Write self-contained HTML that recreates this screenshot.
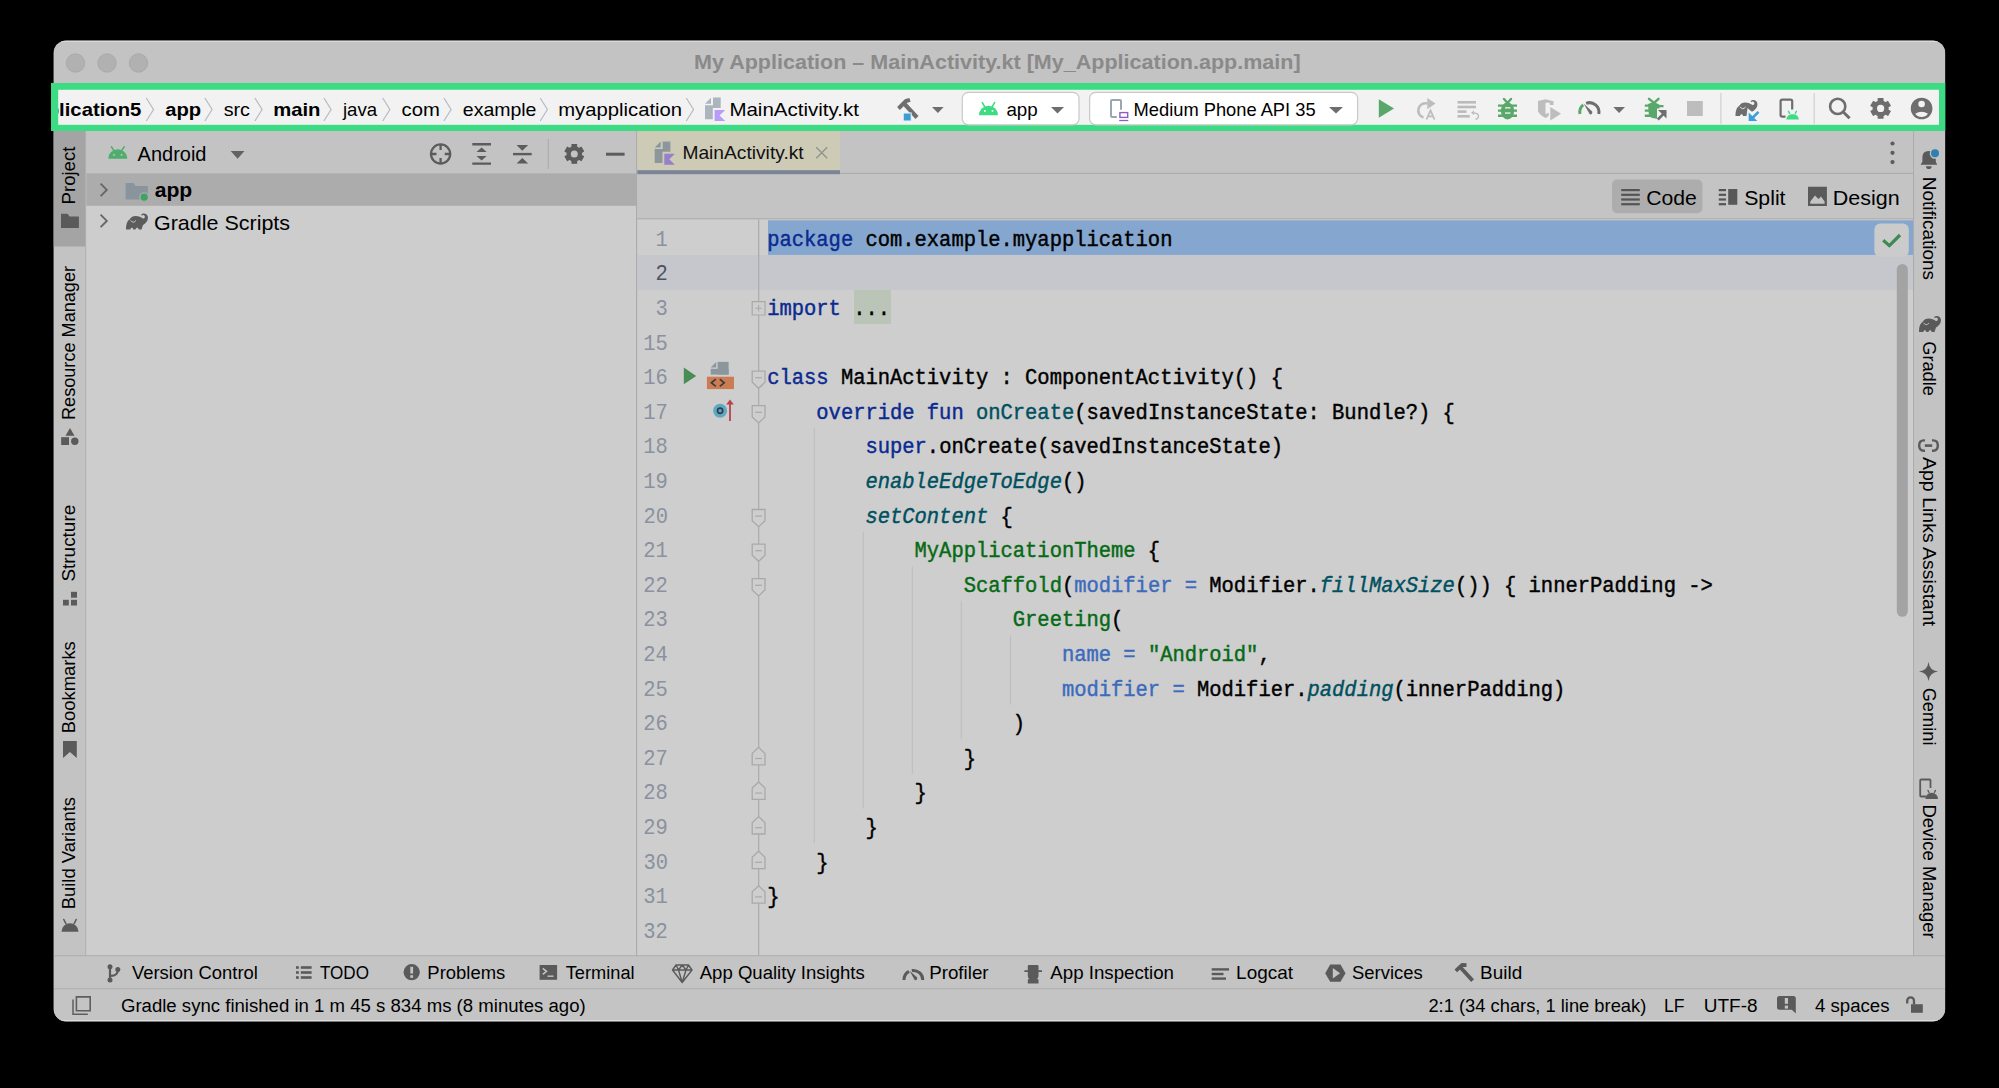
<!DOCTYPE html>
<html><head><meta charset="utf-8"><title>Android Studio</title>
<style>
html,body{margin:0;padding:0;background:#000;width:1999px;height:1088px;overflow:hidden}
svg{display:block;position:absolute;left:0;top:0}
text{font-family:"Liberation Sans",sans-serif}
.code text{font-family:"Liberation Mono",monospace;font-size:22.3px;stroke-width:0.45px}
</style></head>
<body>
<svg width="1999" height="1088" viewBox="0 0 1999 1088">
<defs><clipPath id="win"><rect x="53.5" y="40.5" width="1891.8" height="981.0" rx="13"/></clipPath><clipPath id="bc"><rect x="58" y="90" width="1881" height="35"/></clipPath></defs>
<g clip-path="url(#win)">
<rect x="53.5" y="40.5" width="1891.8" height="981.0" fill="#c4c4c4"/>
<rect x="53.5" y="40.5" width="1891.8" height="43.0" fill="#c3c3c3"/>
<rect x="53.5" y="40.5" width="1891.8" height="1.2" fill="#e4e4e4"/>
<circle cx="75.5" cy="63" r="9.2" fill="#b1b1b1" stroke="#a6a6a6" stroke-width="0.8"/>
<circle cx="107" cy="63" r="9.2" fill="#b1b1b1" stroke="#a6a6a6" stroke-width="0.8"/>
<circle cx="138.5" cy="63" r="9.2" fill="#b1b1b1" stroke="#a6a6a6" stroke-width="0.8"/>
<rect x="53.5" y="131" width="32.0" height="825" fill="#c3c3c3"/>
<rect x="53.5" y="131" width="31.8" height="115.5" fill="#a4a4a4"/>
<rect x="85.3" y="131" width="1.0" height="825" fill="#acacac"/>
<rect x="86.3" y="131" width="549.7" height="42.3" fill="#c3c3c3"/>
<rect x="86.3" y="173.3" width="549.7" height="782.7" fill="#cdcdcd"/>
<rect x="86.3" y="173.3" width="549.7" height="32.5" fill="#acacac"/>
<rect x="636" y="131" width="1.3" height="825" fill="#acacac"/>
<rect x="637.3" y="131" width="1275.7" height="43" fill="#c3c3c3"/>
<rect x="840" y="172.8" width="1073" height="1.4" fill="#adadad"/>
<rect x="637.3" y="174.2" width="1275.7" height="44.3" fill="#c4c4c4"/>
<rect x="637.3" y="218.3" width="1275.7" height="1.2" fill="#acacac"/>
<rect x="637.3" y="219.5" width="1275.7" height="736.0" fill="#cecece"/>
<rect x="637.3" y="255" width="1275.7" height="34.8" fill="#c6c7cc"/>
<rect x="1913" y="131" width="1.2" height="825" fill="#acacac"/>
<rect x="1914.2" y="131" width="31.1" height="825" fill="#c3c3c3"/>
<rect x="53.5" y="955.3" width="1891.8" height="1.2" fill="#acacac"/>
<rect x="53.5" y="956.5" width="1891.8" height="32.0" fill="#c4c4c4"/>
<rect x="53.5" y="988.3" width="1891.8" height="1.2" fill="#adadad"/>
<rect x="53.5" y="989.5" width="1891.8" height="32.0" fill="#c4c4c4"/>
<rect x="53.5" y="1020.3" width="1891.8" height="1.2" fill="#e8e8e8"/>
</g>
<rect x="51" y="83" width="1894.3" height="48" fill="#3ddc84"/>
<rect x="58.2" y="89.8" width="1880.8" height="35.0" fill="#f2f2f2"/>
<g clip-path="url(#bc)">
</g>
<path d="M146.3,98 L153.5,109.5 L146.3,121" fill="none" stroke="#b3bbc2" stroke-width="1.2" stroke-linejoin="miter"/>
<path d="M204.9,98 L212.1,109.5 L204.9,121" fill="none" stroke="#b3bbc2" stroke-width="1.2" stroke-linejoin="miter"/>
<path d="M254.9,98 L262.1,109.5 L254.9,121" fill="none" stroke="#b3bbc2" stroke-width="1.2" stroke-linejoin="miter"/>
<path d="M323.9,98 L331.09999999999997,109.5 L323.9,121" fill="none" stroke="#b3bbc2" stroke-width="1.2" stroke-linejoin="miter"/>
<path d="M382.7,98 L389.9,109.5 L382.7,121" fill="none" stroke="#b3bbc2" stroke-width="1.2" stroke-linejoin="miter"/>
<path d="M443.9,98 L451.09999999999997,109.5 L443.9,121" fill="none" stroke="#b3bbc2" stroke-width="1.2" stroke-linejoin="miter"/>
<path d="M540.2,98 L547.4000000000001,109.5 L540.2,121" fill="none" stroke="#b3bbc2" stroke-width="1.2" stroke-linejoin="miter"/>
<path d="M686.3,98 L693.5,109.5 L686.3,121" fill="none" stroke="#b3bbc2" stroke-width="1.2" stroke-linejoin="miter"/>
<g transform="translate(700,94) scale(1)"><path d="M5,9.8 L11,3.8 L11,9.8 Z" fill="#abb5bd"/><path d="M13,3.6 H20.7 V14 H12.8 V25.2 H5 V11.2 H13 Z" fill="#abb5bd"/><path d="M14.6,16 H25.2 L19.6,21.5 L25.2,27 H14.6 Z" fill="#b99bf8"/></g>
<g transform="translate(890,94) scale(1)"><path d="M8.5,14.5 L16,7 L20,5.8" stroke="#6e6e6e" stroke-width="4" fill="none" stroke-linejoin="round"/><path d="M14.5,10 L27,23.5" stroke="#6e6e6e" stroke-width="4.2" fill="none"/><rect x="13.2" y="19" width="8" height="8" fill="#3a9fd9" stroke="#f2f2f2" stroke-width="1"/><path d="M42,13 H53.7 L47.9,19 Z" fill="#6e6e6e"/></g>
<rect x="962.3" y="92.3" width="116.7" height="32.5" fill="#ffffff" rx="6" stroke="#c9c9c9" stroke-width="1.2"/>
<g transform="translate(970,94) scale(1)"><path d="M9,21.2 A9.5,9.5 0 0 1 28,21.2 Z" fill="#3ddc84"/><path d="M12.3,8.6 L14.6,12.6 M24.6,8.6 L22.3,12.6" stroke="#3ddc84" stroke-width="1.6" stroke-linecap="round"/><rect x="14" y="16" width="1.6" height="1.8" fill="#fff"/><rect x="21.7" y="16" width="1.6" height="1.8" fill="#fff"/></g>
<path d="M1051,107 H1064 L1057.5,113.5 Z" fill="#6e6e6e"/>
<rect x="1089.6" y="92.3" width="268.0" height="32.5" fill="#ffffff" rx="6" stroke="#c9c9c9" stroke-width="1.2"/>
<g transform="translate(1100,94) scale(1)"><path d="M16.8,23 H12 Q11,23 11,22 V7 Q11,6 12,6 H20 Q21,6 21,7 V15.8" stroke="#9aa7b0" stroke-width="2" fill="none"/><rect x="19.9" y="18.6" width="7.8" height="4.8" stroke="#8d5fc3" stroke-width="1.4" fill="none"/><path d="M19.2,26.5 H28.3" stroke="#8d5fc3" stroke-width="1.3"/></g>
<path d="M1329,107 H1343 L1336,113.5 Z" fill="#6e6e6e"/>
<g transform="translate(1370,94) scale(1)"><path d="M8.8,5.2 L24,14.4 L8.8,23.8 Z" fill="#59a869"/><path d="M53.5,23.5 A7.2,7.2 0 1 1 57.5,9.6" stroke="#bdbdbd" stroke-width="2.6" fill="none"/><path d="M57.3,4 L65.5,9.6 L57.3,15.2 Z" fill="#bdbdbd"/><path d="M56.5,25.5 L60.5,16.5 L64.5,25.5 M58,22.3 H63" stroke="#bdbdbd" stroke-width="1.8" fill="none"/></g>
<g transform="translate(1450,94) scale(1)"><rect x="7.5" y="7" width="18.5" height="2.6" fill="#bbbbbb"/><rect x="7.5" y="11.7" width="18.5" height="2.6" fill="#bbbbbb"/><rect x="7.5" y="16.3" width="9" height="2.6" fill="#bbbbbb"/><rect x="7.5" y="21" width="12.3" height="2.6" fill="#bbbbbb"/><path d="M23,18.8 Q28.5,19 28.5,22 Q28.5,25 25.5,25.3" stroke="#bbbbbb" stroke-width="1.3" fill="none"/><path d="M21,18.8 L24,16.6 L24,21 Z" fill="#bbbbbb"/></g>
<g transform="translate(1450,94) scale(1)"><ellipse cx="57.5" cy="17" rx="6.6" ry="8.4" fill="#59a869"/><path d="M48,11.6 H67 M48,16.6 H67 M48,21.8 H67" stroke="#59a869" stroke-width="2.4"/><path d="M54,5 L57.5,9 L61,5" stroke="#59a869" stroke-width="2.4" fill="none" stroke-linecap="round"/><rect x="55" y="13.2" width="5.5" height="1.3" fill="#f2f2f2"/><rect x="55" y="18.4" width="5.5" height="1.3" fill="#f2f2f2"/></g>
<g transform="translate(1530,94) scale(1)"><path d="M8,7 L15.5,5.2 L23.5,7.2 V11 H19.8 V8.8 H15.5 V20 Q17.5,19.5 18.8,18.5 V21.5 Q17,23.5 15.5,24 Q10,21 8,17.5 Z" fill="#bdbdbd"/><path d="M20.3,13 L31,19.8 L20.3,26.6 Z" fill="#bdbdbd"/><path d="M49.9,20.0 A9.6,9.6 0 0 1 53.2,10.9" stroke="#59a869" stroke-width="3" fill="none"/><path d="M56.1,9.3 A9.6,9.6 0 0 1 68.85,20.0" stroke="#6e6e6e" stroke-width="3" fill="none"/><path d="M53.6,9.6 L62.2,17.6 Q62.8,20.6 59.9,20.4 Z" fill="#6e6e6e"/><path d="M83.3,13 H95 L89.1,19 Z" fill="#6e6e6e"/></g>
<g transform="translate(1635,94) scale(1)"><path d="M14,4.8 L19,9 L23.5,4.8" stroke="#59a869" stroke-width="2.4" fill="none" stroke-linecap="round"/><path d="M13,10 Q19,6.5 25,11 L28.5,11 V13.3 H24.5 V14.5 H22 V24.8 Q17,24.5 14,22.5 Z" fill="#59a869"/><path d="M9.8,11.6 H15 M9.8,16.6 H18.5 M9.8,21.8 H15" stroke="#59a869" stroke-width="2.4"/><path d="M22.8,25.5 L30.5,17.8" stroke="#6e6e6e" stroke-width="2.6"/><path d="M23,16 H31.5 V24.5 Z" fill="#6e6e6e"/><rect x="52" y="7" width="15.8" height="15" fill="#bdbdbd"/></g>
<rect x="1720.3" y="93" width="1.2" height="31" fill="#d0d0d0"/>
<g transform="translate(1730,94) scale(1)"><path d="M5.5,22 C5.5,16 7,13 9.5,11.5 C10.5,9.5 12.5,8.5 15,8.5 C18.5,8.5 20.5,10 22,10.8 C23.6,11.5 24.8,10.2 24.2,8.6 C23.6,7.3 22,7 21.3,8.2 L20.6,7.2 C22.2,5.2 26.5,5.5 27.3,9 C28,12.5 26,15.5 22.5,17.5 L21.5,17.5 L17.5,14 L16.5,22 L13,22 C12.6,19.5 10.5,19.5 10,22 Z" fill="#6e6e6e"/><path d="M10,12.8 Q12.5,16.5 15.5,13" stroke="#f2f2f2" stroke-width="0.9" fill="none"/><path d="M28.5,17.8 L21.5,24.8" stroke="#3a9fd9" stroke-width="2.6"/><path d="M18.7,18.5 V27 H27.3 Z" fill="#3a9fd9"/><path d="M55.5,22.6 H52.2 Q50.6,22.6 50.6,21 V7.2 Q50.6,5.6 52.2,5.6 H60.6 Q62.2,5.6 62.2,7.2 V15.5" stroke="#6e6e6e" stroke-width="2.2" fill="none"/><path d="M56.2,25.5 A6.5,6.5 0 0 1 69,25.5 Z" fill="#3ddc84"/><path d="M58.5,17.3 L59.6,19.3 M66.4,17.3 L65.3,19.3" stroke="#3ddc84" stroke-width="1.4" stroke-linecap="round"/></g>
<rect x="1813.6" y="93" width="1.2" height="31" fill="#d0d0d0"/>
<circle cx="1837.7" cy="106.4" r="7.6" fill="none" stroke="#6e6e6e" stroke-width="2.6"/>
<path d="M1843.5,112.2 L1849.6,118.3" fill="none" stroke="#6e6e6e" stroke-width="3"/>
<path d="M1878.18,98.70 L1883.02,98.70 L1882.95,101.17 L1885.69,102.75 L1887.79,101.45 L1890.21,105.64 L1888.03,106.82 L1888.03,109.98 L1890.21,111.16 L1887.79,115.35 L1885.69,114.05 L1882.95,115.63 L1883.02,118.10 L1878.18,118.10 L1878.25,115.63 L1875.51,114.05 L1873.41,115.35 L1870.99,111.16 L1873.17,109.98 L1873.17,106.82 L1870.99,105.64 L1873.41,101.45 L1875.51,102.75 L1878.25,101.17 Z" fill="#6e6e6e" stroke="#6e6e6e" stroke-width="1.2" stroke-linejoin="round"/>
<circle cx="1880.6" cy="108.4" r="3.6" fill="#f2f2f2"/>
<circle cx="1921.6" cy="108.5" r="10.8" fill="#6e6e6e"/>
<circle cx="1921.6" cy="104.0" r="3.3" fill="#f2f2f2"/>
<path d="M1915.2,113.7 Q1921.6,110 1928,113.7 Q1925.5,117 1921.6,117 Q1917.7,117 1915.2,113.7 Z" fill="#f2f2f2"/>
<g transform="translate(108.2,146.2) scale(1)"><path d="M0,12.6 A9.6,9.6 0 0 1 19.2,12.6 Z" fill="#4fae6e"/><path d="M3.3,0.6 L5.4,4 M15.9,0.6 L13.8,4" stroke="#4fae6e" stroke-width="1.6" stroke-linecap="round"/><rect x="5" y="7.8" width="1.6" height="1.7" fill="#c3c3c3"/><rect x="12.6" y="7.8" width="1.6" height="1.7" fill="#c3c3c3"/></g>
<path d="M230.7,151 H244.5 L237.6,158.8 Z" fill="#626262"/>
<circle cx="440.6" cy="154" r="9.6" fill="none" stroke="#5c5c5c" stroke-width="2.3"/>
<path d="M440.6,144.5 V150 M440.6,158 V163.5 M431,154 H436.5 M444.7,154 H450.2" fill="none" stroke="#5c5c5c" stroke-width="2.3"/>
<path d="M472.3,144.3 H491 M472.3,163.6 H491" fill="none" stroke="#5c5c5c" stroke-width="2.4"/>
<path d="M476.5,152 L481.6,147.5 L486.7,152 Z M476.5,156 L481.6,160.5 L486.7,156 Z" fill="#5c5c5c"/>
<path d="M513,154.1 H531.7" fill="none" stroke="#5c5c5c" stroke-width="2.4"/>
<path d="M516.5,145 H528.2 L522.3,150.7 Z M516.5,163.6 H528.2 L522.3,157.9 Z" fill="#5c5c5c"/>
<rect x="547.7" y="139" width="1.2" height="30" fill="#adadad"/>
<path d="M571.98,144.59 L576.62,144.59 L576.56,146.96 L579.18,148.48 L581.21,147.23 L583.53,151.25 L581.44,152.38 L581.44,155.42 L583.53,156.55 L581.21,160.57 L579.18,159.32 L576.56,160.84 L576.62,163.21 L571.98,163.21 L572.04,160.84 L569.42,159.32 L567.39,160.57 L565.07,156.55 L567.16,155.42 L567.16,152.38 L565.07,151.25 L567.39,147.23 L569.42,148.48 L572.04,146.96 Z" fill="#5c5c5c" stroke="#5c5c5c" stroke-width="1.2" stroke-linejoin="round"/>
<circle cx="574.3" cy="153.9" r="3.5" fill="#c3c3c3"/>
<path d="M606,154.2 H624.6" fill="none" stroke="#5c5c5c" stroke-width="3"/>
<path d="M100.6,183.6 L106.8,189.9 L100.6,196.2" fill="none" stroke="#676767" stroke-width="1.9"/>
<path d="M100.6,214.6 L106.8,220.9 L100.6,227.2" fill="none" stroke="#676767" stroke-width="1.9"/>
<path d="M125.6,183 H133.5 L135.5,186 H147.8 V199.6 H125.6 Z" fill="#8a949c"/>
<circle cx="144.2" cy="197.2" r="4.3" fill="#3aa565" stroke="#acacac" stroke-width="1.4"/>
<g transform="translate(120.5,207.5) scale(1)"><path d="M5.5,22 C5.5,16 7,13 9.5,11.5 C10.5,9.5 12.5,8.5 15,8.5 C18.5,8.5 20.5,10 22,10.8 C23.6,11.5 24.8,10.2 24.2,8.6 C23.6,7.3 22,7 21.3,8.2 L20.6,7.2 C22.2,5.2 26.5,5.5 27.3,9 C28,12.5 26,15.5 22.5,17.5 L21,22 L18.2,22 C17.8,19.5 15.5,19.5 15,22 L12.8,22 C12.4,19.5 10.3,19.5 9.8,22 Z" fill="#5c5c5c"/><path d="M10,12.8 Q12.5,16.5 15.5,13" stroke="#cdcdcd" stroke-width="0.9" fill="none"/></g>
<rect x="637.3" y="131.3" width="202.7" height="38.9" fill="#cdcbb5"/>
<rect x="637.3" y="170.2" width="202.7" height="4.0" fill="#7b8396"/>
<g transform="translate(649.7,137.8) scale(1)"><path d="M5,9.8 L11,3.8 L11,9.8 Z" fill="#8c979d"/><path d="M13,3.6 H20.7 V14 H12.8 V25.2 H5 V11.2 H13 Z" fill="#8c979d"/><path d="M14.6,16 H25.2 L19.6,21.5 L25.2,27 H14.6 Z" fill="#9680c9"/></g>
<path d="M816.2,147.2 L827.2,158.3 M827.2,147.2 L816.2,158.3" fill="none" stroke="#8f948a" stroke-width="1.3"/>
<circle cx="1892.5" cy="143.5" r="2.1" fill="#5c5c5c"/>
<circle cx="1892.5" cy="152.8" r="2.1" fill="#5c5c5c"/>
<circle cx="1892.5" cy="162.1" r="2.1" fill="#5c5c5c"/>
<rect x="1612" y="179.6" width="90.4" height="33.6" fill="#adadad" rx="5"/>
<rect x="1621.2" y="189.0" width="18.6" height="2.2" fill="#555555"/>
<rect x="1621.2" y="193.7" width="18.6" height="2.2" fill="#555555"/>
<rect x="1621.2" y="198.4" width="18.6" height="2.2" fill="#555555"/>
<rect x="1621.2" y="203.1" width="18.6" height="2.2" fill="#555555"/>
<rect x="1718.8" y="189.0" width="7.2" height="2.2" fill="#555555"/>
<rect x="1718.8" y="193.7" width="7.2" height="2.2" fill="#555555"/>
<rect x="1718.8" y="198.4" width="7.2" height="2.2" fill="#555555"/>
<rect x="1718.8" y="203.1" width="7.2" height="2.2" fill="#555555"/>
<rect x="1728.2" y="189" width="9.1" height="15.8" fill="#585858"/>
<path d="M1808,186.8 H1826.9 V206 H1808 Z M1810.3,201.5 L1815,195.5 L1818.5,199 L1821,196.5 L1824.6,201.5 V203.7 H1810.3 Z" fill="#5a5a5a" fill-rule="evenodd"/>
<rect x="768" y="220.3" width="1145" height="34.6" fill="#85a7cf"/>
<rect x="854" y="289.8" width="37" height="34.2" fill="#bac5b7"/>
<rect x="758.1" y="219.5" width="1.2" height="736.0" fill="#ababab"/>
<rect x="813.8" y="427.90000000000003" width="1.0" height="415.2" fill="#bcbcbc"/>
<rect x="862.7" y="531.7" width="1.0" height="276.8" fill="#bcbcbc"/>
<rect x="911.8" y="566.3" width="1.0" height="207.6" fill="#bcbcbc"/>
<rect x="960.8" y="600.9000000000001" width="1.0" height="138.4" fill="#bcbcbc"/>
<rect x="1009.9" y="635.5" width="1.0" height="69.2" fill="#bcbcbc"/>
<path d="M752.2,371.10 H765 V382.30 L758.6,388.30 L752.2,382.30 Z" fill="#cecece" stroke="#a9a9a9" stroke-width="1.3"/>
<path d="M755.2,377.70 H762" fill="none" stroke="#a9a9a9" stroke-width="1.2"/>
<path d="M752.2,405.70 H765 V416.90 L758.6,422.90 L752.2,416.90 Z" fill="#cecece" stroke="#a9a9a9" stroke-width="1.3"/>
<path d="M755.2,412.30 H762" fill="none" stroke="#a9a9a9" stroke-width="1.2"/>
<path d="M752.2,509.50 H765 V520.70 L758.6,526.70 L752.2,520.70 Z" fill="#cecece" stroke="#a9a9a9" stroke-width="1.3"/>
<path d="M755.2,516.10 H762" fill="none" stroke="#a9a9a9" stroke-width="1.2"/>
<path d="M752.2,544.10 H765 V555.30 L758.6,561.30 L752.2,555.30 Z" fill="#cecece" stroke="#a9a9a9" stroke-width="1.3"/>
<path d="M755.2,550.70 H762" fill="none" stroke="#a9a9a9" stroke-width="1.2"/>
<path d="M752.2,578.70 H765 V589.90 L758.6,595.90 L752.2,589.90 Z" fill="#cecece" stroke="#a9a9a9" stroke-width="1.3"/>
<path d="M755.2,585.30 H762" fill="none" stroke="#a9a9a9" stroke-width="1.2"/>
<path d="M752.2,764.80 H765 V753.50 L758.6,747.40 L752.2,753.50 Z" fill="#cecece" stroke="#a9a9a9" stroke-width="1.3"/>
<path d="M755.2,758.50 H762" fill="none" stroke="#a9a9a9" stroke-width="1.2"/>
<path d="M752.2,799.40 H765 V788.10 L758.6,782.00 L752.2,788.10 Z" fill="#cecece" stroke="#a9a9a9" stroke-width="1.3"/>
<path d="M755.2,793.10 H762" fill="none" stroke="#a9a9a9" stroke-width="1.2"/>
<path d="M752.2,834.00 H765 V822.70 L758.6,816.60 L752.2,822.70 Z" fill="#cecece" stroke="#a9a9a9" stroke-width="1.3"/>
<path d="M755.2,827.70 H762" fill="none" stroke="#a9a9a9" stroke-width="1.2"/>
<path d="M752.2,868.60 H765 V857.30 L758.6,851.20 L752.2,857.30 Z" fill="#cecece" stroke="#a9a9a9" stroke-width="1.3"/>
<path d="M755.2,862.30 H762" fill="none" stroke="#a9a9a9" stroke-width="1.2"/>
<path d="M752.2,903.20 H765 V891.90 L758.6,885.80 L752.2,891.90 Z" fill="#cecece" stroke="#a9a9a9" stroke-width="1.3"/>
<path d="M755.2,896.90 H762" fill="none" stroke="#a9a9a9" stroke-width="1.2"/>
<path d="M752.2,301.6 H765 V315 H752.2 Z" fill="#cecece" stroke="#a9a9a9" stroke-width="1.2"/>
<path d="M755.3,308.3 H761.9 M758.6,305 V311.6" fill="none" stroke="#a9a9a9" stroke-width="1.1"/>
<path d="M683.8,367.4 L696.2,375.9 L683.8,384.3 Z" fill="#4a8c55"/>
<path d="M710.7,367.5 L716.2,362 V367.5 Z" fill="#8c979d"/>
<rect x="717.6" y="361.9" width="11.0" height="12.7" fill="#8c979d"/>
<rect x="710.7" y="368.8" width="17.9" height="5.8" fill="#8c979d"/>
<rect x="706.9" y="376.7" width="27.1" height="12.4" fill="#cc7c52"/>
<path d="M715.8,379.2 L711.4,382.8 L715.8,386.4 M719.8,379.2 L724.2,382.8 L719.8,386.4" fill="none" stroke="#3b3b3b" stroke-width="1.7"/>
<circle cx="720.1" cy="410.7" r="6.2" fill="#5fa8c3" stroke="#5fa8c3" stroke-width="1.6"/>
<circle cx="720.1" cy="410.7" r="2.6" fill="none" stroke="#2f3f4a" stroke-width="1.7"/>
<path d="M730,421 V402" fill="none" stroke="#b8424d" stroke-width="1.8"/>
<path d="M726.2,404.5 L730,399.6 L733.8,404.5 Z" fill="#b8424d"/>
<rect x="1874.4" y="223.6" width="34.4" height="33.4" fill="#cbcbcb" rx="6"/>
<path d="M1883.2,240.2 L1889.4,245.6 L1900,235" fill="none" stroke="#3d8a52" stroke-width="3.2"/>
<rect x="1896.8" y="263.9" width="11.0" height="352.9" fill="#a3a3a3" rx="5.5"/>
<path d="M61,213.8 H67.5 L69.5,216.5 H78.9 V228.1 H61 Z" fill="#5a5a5a"/>
<path d="M65.5,435.8 L70,428 L74.5,435.8 Z" fill="#5a5a5a"/>
<rect x="61.2" y="437.2" width="7.8" height="7.8" fill="#5a5a5a"/>
<circle cx="74.8" cy="441.2" r="3.7" fill="#5a5a5a"/>
<rect x="71" y="591.8" width="6" height="5.9" fill="#5a5a5a"/>
<rect x="63" y="599.8" width="5.8" height="5.7" fill="#5a5a5a"/>
<rect x="71" y="599.8" width="6" height="5.7" fill="#5a5a5a"/>
<path d="M63,741 H76.8 V758 L69.9,752 L63,758 Z" fill="#5a5a5a"/>
<path d="M61.5,931.8 A8.5,8.5 0 0 1 78.5,931.8 Z" fill="#5a5a5a"/>
<path d="M63.8,919.5 L65.8,923.5 M76.2,919.5 L74.2,923.5" fill="none" stroke="#5a5a5a" stroke-width="1.6" stroke-linecap="round"/>
<g transform="translate(1914,145) scale(1)"><path d="M6.5,19.8 L8.4,16.8 V12 Q8.6,6 14.5,6 Q15.3,6 16.2,6.2 A5.4,5.4 0 0 0 21.8,13.8 V16.8 L23.2,19.8 Z" fill="#5a5a5a"/><path d="M12,21.3 A2.8,2.8 0 0 0 17.6,21.3 Z" fill="#5a5a5a"/><circle cx="21" cy="8.2" r="4" fill="#2f7fb0"/></g>
<g transform="translate(1914,310) scale(1)"><path d="M5,22 C5,16 6.5,13 9,11.5 C10,9.5 12,8.5 14.5,8.5 C18,8.5 20,10 21.5,10.8 C23.1,11.5 24.3,10.2 23.7,8.6 C23.1,7.3 21.5,7 20.8,8.2 L20.1,7.2 C21.7,5.2 26,5.5 26.8,9 C27.5,12.5 25.5,15.5 22,17.5 L20.5,22 L17.7,22 C17.3,19.5 15,19.5 14.5,22 L12.3,22 C11.9,19.5 9.8,19.5 9.3,22 Z" fill="#5a5a5a"/><path d="M9.5,12.8 Q12,16.5 15,13" stroke="#c3c3c3" stroke-width="0.9" fill="none"/></g>
<path d="M1925,440.4 H1923.8 Q1919.2,440.4 1919.2,445.6 Q1919.2,450.8 1923.8,450.8 H1925 M1932,440.4 H1933.2 Q1937.8,440.4 1937.8,445.6 Q1937.8,450.8 1933.2,450.8 H1932" fill="none" stroke="#5a5a5a" stroke-width="2.4"/>
<path d="M1924.8,445.6 H1932.2" fill="none" stroke="#5a5a5a" stroke-width="2.6"/>
<path d="M1928.5,662 Q1929.5,670.5 1938,671.5 Q1929.5,672.5 1928.5,681 Q1927.5,672.5 1919,671.5 Q1927.5,670.5 1928.5,662 Z" fill="#5a5a5a"/>
<path d="M1926,796.5 H1921.2 Q1920.2,796.5 1920.2,795.5 V780.5 Q1920.2,779.5 1921.2,779.5 H1929.5 Q1930.5,779.5 1930.5,780.5 V788" fill="none" stroke="#5a5a5a" stroke-width="1.8"/>
<path d="M1925.5,799 A6.2,6.2 0 0 1 1937.9,799 Z" fill="#5a5a5a"/>
<path d="M1928,790.5 L1929,792.5 M1935.4,790.5 L1934.4,792.5" fill="none" stroke="#5a5a5a" stroke-width="1.4" stroke-linecap="round"/>
<g transform="translate(100,958) scale(1)"><circle cx="10" cy="8.8" r="2.5" fill="#5a5a5a"/><circle cx="17.8" cy="11.5" r="2.5" fill="#5a5a5a"/><circle cx="10" cy="22" r="2.5" fill="#5a5a5a"/><path d="M10,8.8 V22 M17.8,11.5 C17.8,16 16,17.8 10.5,17.8" stroke="#5a5a5a" stroke-width="2.2" fill="none"/></g>
<g transform="translate(290,958) scale(1)"><rect x="6" y="8.2" width="2.8" height="2.6" fill="#5a5a5a"/><rect x="10.8" y="8.2" width="10.8" height="2.6" fill="#5a5a5a"/><rect x="6" y="13.2" width="2.8" height="2.6" fill="#5a5a5a"/><rect x="10.8" y="13.2" width="10.8" height="2.6" fill="#5a5a5a"/><rect x="6" y="18.2" width="2.8" height="2.6" fill="#5a5a5a"/><rect x="10.8" y="18.2" width="10.8" height="2.6" fill="#5a5a5a"/></g>
<circle cx="411.7" cy="972.2" r="8.1" fill="#5a5a5a"/>
<rect x="410.3" y="966.8" width="2.8" height="6.7" fill="#c4c4c4"/>
<rect x="410.3" y="975.2" width="2.8" height="2.6" fill="#c4c4c4"/>
<rect x="539.6" y="965" width="17.5" height="14.8" fill="#5a5a5a"/>
<path d="M542.8,968.3 L546.5,971.3 L542.8,974.3" fill="none" stroke="#c4c4c4" stroke-width="1.5"/>
<rect x="547.5" y="975.5" width="6.0" height="1.4" fill="#c4c4c4"/>
<path d="M676,965 H688.5 L692,970 L682.2,982.5 L672.5,970 Z M672.5,970 H692 M678.5,970 L682.2,982.5 L686,970 M676,965 L678.5,970 L682.2,965 L686,970 L688.5,965" fill="none" stroke="#5a5a5a" stroke-width="1.4" stroke-linejoin="round"/>
<path d="M904,980 A9.6,9.6 0 0 1 909,971.4" fill="none" stroke="#5a5a5a" stroke-width="3"/>
<path d="M911.8,970.5 A9.6,9.6 0 0 1 922.8,980" fill="none" stroke="#5a5a5a" stroke-width="3"/>
<path d="M909.6,970.8 L917.2,977.6 Q917.6,980.4 914.8,980.2 Z" fill="#5a5a5a"/>
<path d="M1029,965 H1037.5 Q1038.5,965 1038.5,966 V970.2 H1042 V972 H1038.5 V976 Q1038.5,978 1037,979 L1038.5,979.5 V983.4 H1027.8 V979.5 L1029.3,979 Q1027.8,978 1027.8,976 V972 H1024.4 V970.2 H1027.8 V966 Q1027.8,965 1029,965 Z" fill="#5a5a5a"/>
<rect x="1211.7" y="968.2" width="17.3" height="2.4" fill="#5a5a5a"/>
<rect x="1211.7" y="972.8" width="11.8" height="2.4" fill="#5a5a5a"/>
<rect x="1211.7" y="977.4" width="14.3" height="2.4" fill="#5a5a5a"/>
<path d="M1330.2,964.6 H1340.5 L1345.5,973.2 L1340.5,981.7 H1330.2 L1325.2,973.2 Z" fill="#5a5a5a"/>
<path d="M1332.8,968 L1340,973.2 L1332.8,978.4 Z" fill="#c4c4c4"/>
<path d="M1455.8,970.8 L1462.2,964.9 L1466.5,965.2" fill="none" stroke="#5a5a5a" stroke-width="3.8" stroke-linejoin="round"/>
<path d="M1460.8,967.8 L1472.6,980.6" fill="none" stroke="#5a5a5a" stroke-width="3.8"/>
<path d="M76.4,996.9 H90.2 V1010.7 H76.4 Z" fill="none" stroke="#5e5e5e" stroke-width="1.6"/>
<path d="M73,999.5 V1014.3 H87.8" fill="none" stroke="#5e5e5e" stroke-width="1.5"/>
<g transform="translate(1770,990) scale(1)"><path d="M9.5,6 H23.3 Q25.8,6 25.8,8.5 V23.5 L21.8,19.8 H9.5 Q7,19.8 7,17.3 V8.5 Q7,6 9.5,6 Z" fill="#5a5a5a"/><rect x="14.8" y="8" width="3.2" height="5.8" fill="#c4c4c4"/><rect x="14.8" y="15.6" width="3.2" height="3" fill="#c4c4c4"/></g>
<g transform="translate(1900,990) scale(1)"><path d="M7.2,13.6 V10.8 A3.4,3.4 0 0 1 14,10.8 V14.5" stroke="#5a5a5a" stroke-width="2.3" fill="none"/><rect x="11" y="14.2" width="11.8" height="8.6" fill="#5a5a5a"/></g>
<g class="code">
<text transform="translate(767.20,245.80) scale(0.9184,1)" xml:space="preserve"><tspan fill="#0b2a90" stroke="#0b2a90">package</tspan><tspan fill="#000000" stroke="#000000"> com.example.myapplication</tspan></text>
<text transform="translate(767.20,315.00) scale(0.9184,1)" xml:space="preserve"><tspan fill="#0b2a90" stroke="#0b2a90">import</tspan><tspan fill="#000000" stroke="#000000"> ...</tspan></text>
<text transform="translate(767.20,384.20) scale(0.9184,1)" xml:space="preserve"><tspan fill="#0b2a90" stroke="#0b2a90">class</tspan><tspan fill="#000000" stroke="#000000"> MainActivity : ComponentActivity() {</tspan></text>
<text transform="translate(767.20,418.80) scale(0.9184,1)" xml:space="preserve"><tspan fill="#000000" stroke="#000000">    </tspan><tspan fill="#0b2a90" stroke="#0b2a90">override fun</tspan><tspan fill="#000000" stroke="#000000"> </tspan><tspan fill="#00505f" stroke="#00505f">onCreate</tspan><tspan fill="#000000" stroke="#000000">(savedInstanceState: Bundle?) {</tspan></text>
<text transform="translate(767.20,453.40) scale(0.9184,1)" xml:space="preserve"><tspan fill="#000000" stroke="#000000">        </tspan><tspan fill="#0b2a90" stroke="#0b2a90">super</tspan><tspan fill="#000000" stroke="#000000">.onCreate(savedInstanceState)</tspan></text>
<text transform="translate(767.20,488.00) scale(0.9184,1)" xml:space="preserve"><tspan fill="#000000" stroke="#000000">        </tspan><tspan fill="#00505f" stroke="#00505f" font-style="italic">enableEdgeToEdge</tspan><tspan fill="#000000" stroke="#000000">()</tspan></text>
<text transform="translate(767.20,522.60) scale(0.9184,1)" xml:space="preserve"><tspan fill="#000000" stroke="#000000">        </tspan><tspan fill="#00505f" stroke="#00505f" font-style="italic">setContent</tspan><tspan fill="#000000" stroke="#000000"> {</tspan></text>
<text transform="translate(767.20,557.20) scale(0.9184,1)" xml:space="preserve"><tspan fill="#000000" stroke="#000000">            </tspan><tspan fill="#066a15" stroke="#066a15">MyApplicationTheme</tspan><tspan fill="#000000" stroke="#000000"> {</tspan></text>
<text transform="translate(767.20,591.80) scale(0.9184,1)" xml:space="preserve"><tspan fill="#000000" stroke="#000000">                </tspan><tspan fill="#066a15" stroke="#066a15">Scaffold</tspan><tspan fill="#000000" stroke="#000000">(</tspan><tspan fill="#3c6bbd" stroke="#3c6bbd">modifier =</tspan><tspan fill="#000000" stroke="#000000"> Modifier.</tspan><tspan fill="#00505f" stroke="#00505f" font-style="italic">fillMaxSize</tspan><tspan fill="#000000" stroke="#000000">()) { innerPadding -&gt;</tspan></text>
<text transform="translate(767.20,626.40) scale(0.9184,1)" xml:space="preserve"><tspan fill="#000000" stroke="#000000">                    </tspan><tspan fill="#066a15" stroke="#066a15">Greeting</tspan><tspan fill="#000000" stroke="#000000">(</tspan></text>
<text transform="translate(767.20,661.00) scale(0.9184,1)" xml:space="preserve"><tspan fill="#000000" stroke="#000000">                        </tspan><tspan fill="#3c6bbd" stroke="#3c6bbd">name =</tspan><tspan fill="#000000" stroke="#000000"> </tspan><tspan fill="#066a15" stroke="#066a15">"Android"</tspan><tspan fill="#000000" stroke="#000000">,</tspan></text>
<text transform="translate(767.20,695.60) scale(0.9184,1)" xml:space="preserve"><tspan fill="#000000" stroke="#000000">                        </tspan><tspan fill="#3c6bbd" stroke="#3c6bbd">modifier =</tspan><tspan fill="#000000" stroke="#000000"> Modifier.</tspan><tspan fill="#00505f" stroke="#00505f" font-style="italic">padding</tspan><tspan fill="#000000" stroke="#000000">(innerPadding)</tspan></text>
<text transform="translate(767.20,730.20) scale(0.9184,1)" xml:space="preserve"><tspan fill="#000000" stroke="#000000">                    )</tspan></text>
<text transform="translate(767.20,764.80) scale(0.9184,1)" xml:space="preserve"><tspan fill="#000000" stroke="#000000">                }</tspan></text>
<text transform="translate(767.20,799.40) scale(0.9184,1)" xml:space="preserve"><tspan fill="#000000" stroke="#000000">            }</tspan></text>
<text transform="translate(767.20,834.00) scale(0.9184,1)" xml:space="preserve"><tspan fill="#000000" stroke="#000000">        }</tspan></text>
<text transform="translate(767.20,868.60) scale(0.9184,1)" xml:space="preserve"><tspan fill="#000000" stroke="#000000">    }</tspan></text>
<text transform="translate(767.20,903.20) scale(0.9184,1)" xml:space="preserve"><tspan fill="#000000" stroke="#000000">}</tspan></text>
<text transform="translate(655.48,245.80) scale(0.9184,1)" fill="#8a919f">1</text>
<text transform="translate(655.48,280.40) scale(0.9184,1)" fill="#4d5361">2</text>
<text transform="translate(655.48,315.00) scale(0.9184,1)" fill="#8a919f">3</text>
<text transform="translate(643.19,349.60) scale(0.9184,1)" fill="#8a919f">15</text>
<text transform="translate(643.19,384.20) scale(0.9184,1)" fill="#8a919f">16</text>
<text transform="translate(643.19,418.80) scale(0.9184,1)" fill="#8a919f">17</text>
<text transform="translate(643.19,453.40) scale(0.9184,1)" fill="#8a919f">18</text>
<text transform="translate(643.19,488.00) scale(0.9184,1)" fill="#8a919f">19</text>
<text transform="translate(643.51,522.60) scale(0.9184,1)" fill="#8a919f">20</text>
<text transform="translate(643.19,557.20) scale(0.9184,1)" fill="#8a919f">21</text>
<text transform="translate(643.19,591.80) scale(0.9184,1)" fill="#8a919f">22</text>
<text transform="translate(643.19,626.40) scale(0.9184,1)" fill="#8a919f">23</text>
<text transform="translate(643.19,661.00) scale(0.9184,1)" fill="#8a919f">24</text>
<text transform="translate(643.19,695.60) scale(0.9184,1)" fill="#8a919f">25</text>
<text transform="translate(643.19,730.20) scale(0.9184,1)" fill="#8a919f">26</text>
<text transform="translate(643.19,764.80) scale(0.9184,1)" fill="#8a919f">27</text>
<text transform="translate(643.19,799.40) scale(0.9184,1)" fill="#8a919f">28</text>
<text transform="translate(643.19,834.00) scale(0.9184,1)" fill="#8a919f">29</text>
<text transform="translate(643.51,868.60) scale(0.9184,1)" fill="#8a919f">30</text>
<text transform="translate(643.19,903.20) scale(0.9184,1)" fill="#8a919f">31</text>
<text transform="translate(643.19,937.80) scale(0.9184,1)" fill="#8a919f">32</text>
</g>
<text transform="translate(694.05,68.80) scale(1.0512,1)" font-size="20.5" fill="#8a8a8a" font-weight="700" xml:space="preserve">My Application – MainActivity.kt [My_Application.app.main]</text>
<g clip-path="url(#bc)"><text transform="translate(46.73,116.00) scale(1.0905,1)" font-size="18.6" fill="#000" font-weight="700" xml:space="preserve">plication5</text></g>
<text transform="translate(165.18,116.00) scale(1.0849,1)" font-size="18.6" fill="#000" font-weight="700" xml:space="preserve">app</text>
<text transform="translate(223.69,116.00) scale(1.0614,1)" font-size="18.6" fill="#000" xml:space="preserve">src</text>
<text transform="translate(273.13,116.00) scale(1.0907,1)" font-size="18.6" fill="#000" font-weight="700" xml:space="preserve">main</text>
<text transform="translate(342.98,116.00) scale(1.0023,1)" font-size="18.6" fill="#000" xml:space="preserve">java</text>
<text transform="translate(401.57,116.00) scale(1.0895,1)" font-size="18.6" fill="#000" xml:space="preserve">com</text>
<text transform="translate(462.79,116.00) scale(1.0483,1)" font-size="18.6" fill="#000" xml:space="preserve">example</text>
<text transform="translate(558.23,116.00) scale(1.0904,1)" font-size="18.6" fill="#000" xml:space="preserve">myapplication</text>
<text transform="translate(729.40,116.00) scale(1.1026,1)" font-size="18.6" fill="#000" xml:space="preserve">MainActivity.kt</text>
<text transform="translate(1006.41,116.00) scale(1.0102,1)" font-size="18.6" fill="#000" xml:space="preserve">app</text>
<text transform="translate(1133.57,116.00) scale(0.9842,1)" font-size="18.6" fill="#000" xml:space="preserve">Medium Phone API 35</text>
<text transform="translate(137.60,160.80) scale(1.0361,1)" font-size="19.3" fill="#000" xml:space="preserve">Android</text>
<text transform="translate(154.67,197.40) scale(1.0425,1)" font-size="20.3" fill="#000" font-weight="700" xml:space="preserve">app</text>
<text transform="translate(153.99,229.60) scale(1.0589,1)" font-size="20.3" fill="#000" xml:space="preserve">Gradle Scripts</text>
<text transform="translate(682.40,159.20) scale(1.0498,1)" font-size="18.3" fill="#111" xml:space="preserve">MainActivity.kt</text>
<text transform="translate(1646.21,204.90) scale(1.0701,1)" font-size="19.8" fill="#000" xml:space="preserve">Code</text>
<text transform="translate(1744.14,204.90) scale(1.0746,1)" font-size="19.8" fill="#000" xml:space="preserve">Split</text>
<text transform="translate(1832.72,204.90) scale(1.0852,1)" font-size="19.8" fill="#000" xml:space="preserve">Design</text>
<text transform="translate(75.40,204.45) rotate(-90) scale(1.0220,1)" font-size="18.2" fill="#000" xml:space="preserve">Project</text>
<text transform="translate(75.40,420.02) rotate(-90) scale(0.9956,1)" font-size="18.2" fill="#000" xml:space="preserve">Resource Manager</text>
<text transform="translate(75.40,581.59) rotate(-90) scale(1.0409,1)" font-size="18.2" fill="#000" xml:space="preserve">Structure</text>
<text transform="translate(75.40,733.24) rotate(-90) scale(1.0119,1)" font-size="18.2" fill="#000" xml:space="preserve">Bookmarks</text>
<text transform="translate(75.40,909.24) rotate(-90) scale(1.0124,1)" font-size="18.2" fill="#000" xml:space="preserve">Build Variants</text>
<text transform="translate(1922.80,176.72) rotate(90) scale(1.0428,1)" font-size="18.2" fill="#000" xml:space="preserve">Notifications</text>
<text transform="translate(1922.80,341.25) rotate(90) scale(0.9993,1)" font-size="18.2" fill="#000" xml:space="preserve">Gradle</text>
<text transform="translate(1922.80,457.00) rotate(90) scale(1.0731,1)" font-size="18.2" fill="#000" xml:space="preserve">App Links Assistant</text>
<text transform="translate(1922.80,687.64) rotate(90) scale(1.0055,1)" font-size="18.2" fill="#000" xml:space="preserve">Gemini</text>
<text transform="translate(1922.80,804.56) rotate(90) scale(1.0114,1)" font-size="18.2" fill="#000" xml:space="preserve">Device Manager</text>
<text transform="translate(131.90,978.70) scale(1.0472,1)" font-size="17.6" fill="#000" xml:space="preserve">Version Control</text>
<text transform="translate(319.93,978.70) scale(0.9721,1)" font-size="17.6" fill="#000" xml:space="preserve">TODO</text>
<text transform="translate(427.36,978.70) scale(1.0482,1)" font-size="17.6" fill="#000" xml:space="preserve">Problems</text>
<text transform="translate(565.72,978.70) scale(1.0358,1)" font-size="17.6" fill="#000" xml:space="preserve">Terminal</text>
<text transform="translate(699.70,978.70) scale(1.0559,1)" font-size="17.6" fill="#000" xml:space="preserve">App Quality Insights</text>
<text transform="translate(929.24,978.70) scale(1.0647,1)" font-size="17.6" fill="#000" xml:space="preserve">Profiler</text>
<text transform="translate(1050.30,978.70) scale(1.0628,1)" font-size="17.6" fill="#000" xml:space="preserve">App Inspection</text>
<text transform="translate(1236.12,978.70) scale(1.0751,1)" font-size="17.6" fill="#000" xml:space="preserve">Logcat</text>
<text transform="translate(1352.02,978.70) scale(1.0484,1)" font-size="17.6" fill="#000" xml:space="preserve">Services</text>
<text transform="translate(1480.12,978.70) scale(1.0769,1)" font-size="17.6" fill="#000" xml:space="preserve">Build</text>
<text transform="translate(120.93,1012.10) scale(1.0564,1)" font-size="17.6" fill="#000" xml:space="preserve">Gradle sync finished in 1 m 45 s 834 ms (8 minutes ago)</text>
<text transform="translate(1428.44,1012.10) scale(1.0413,1)" font-size="17.6" fill="#000" xml:space="preserve">2:1 (34 chars, 1 line break)</text>
<text transform="translate(1664.02,1012.10) scale(1.0006,1)" font-size="17.6" fill="#000" xml:space="preserve">LF</text>
<text transform="translate(1703.81,1012.10) scale(1.0802,1)" font-size="17.6" fill="#000" xml:space="preserve">UTF-8</text>
<text transform="translate(1814.91,1012.10) scale(1.0601,1)" font-size="17.6" fill="#000" xml:space="preserve">4 spaces</text>
</svg>
</body></html>
